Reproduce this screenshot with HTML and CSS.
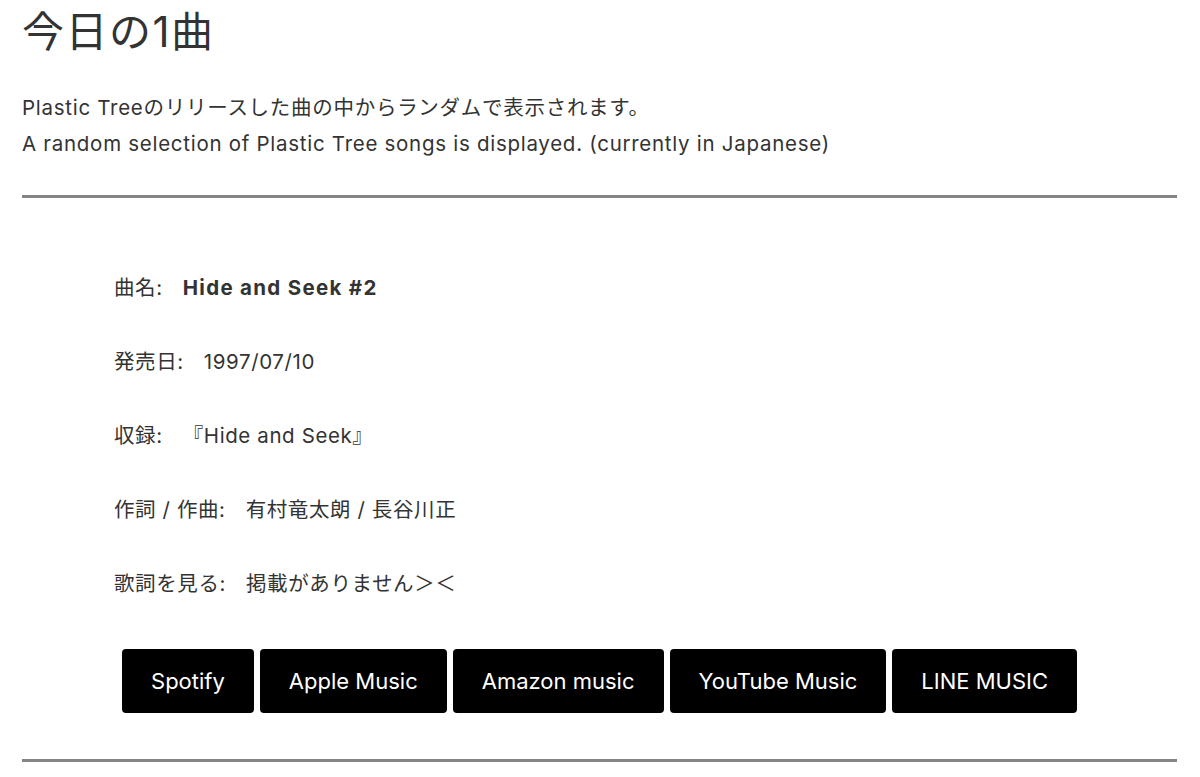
FILE: index.html
```html
<!DOCTYPE html>
<html lang="ja">
<head>
<meta charset="utf-8">
<title>今日の1曲</title>
<link rel="stylesheet" href="styles.css">
</head>
<body>
<main class="page">
  <h1 class="title">今日の1曲</h1>
  <p class="lead">Plastic Treeのリリースした曲の中からランダムで表示されます。<br>A random selection of Plastic Tree songs is displayed. (currently in Japanese)</p>
  <hr class="rule">
  <section class="song">
    <div class="row"><span class="label">曲名:</span><span class="value strong">Hide and Seek #2</span></div>
    <div class="row"><span class="label">発売日:</span><span class="value">1997/07/10</span></div>
    <div class="row"><span class="label">収録:</span><span class="value">『Hide and Seek』</span></div>
    <div class="row"><span class="label">作詞 / 作曲:</span><span class="value">有村竜太朗 / 長谷川正</span></div>
    <div class="row"><span class="label">歌詞を見る:</span><span class="value">掲載がありません＞＜</span></div>
  </section>
  <nav class="links">
    <a class="btn" href="#">Spotify</a>
    <a class="btn" href="#">Apple Music</a>
    <a class="btn" href="#">Amazon music</a>
    <a class="btn" href="#">YouTube Music</a>
    <a class="btn" href="#">LINE MUSIC</a>
  </nav>
  <hr class="rule rule-bottom">
</main>
</body>
</html>
```

FILE: styles.css
```css
html, body {
  margin: 0;
  padding: 0;
  background: #fff;
}
body {
  font-family: Inter, "Noto Sans CJK JP", sans-serif;
  color: #333;
}
.page {
  padding: 0 23px 0 22px;
}
.title {
  margin: 2px 0 0;
  font-size: 42px;
  line-height: 60px;
  font-weight: 400;
  letter-spacing: 1.5px;
}
.lead {
  margin: 28px 0 0;
  font-size: 20.5px;
  line-height: 36px;
  letter-spacing: 0.72px;
}
.rule {
  margin: 33px 0 0;
  border: 0;
  height: 3px;
  background: #858585;
}
.song {
  margin-top: 72px;
  padding-left: 92px;
  display: flex;
  flex-direction: column;
  gap: 38px;
}
.row {
  display: flex;
  align-items: center;
  height: 36px;
  font-size: 20.5px;
  line-height: 36px;
  letter-spacing: 0.6px;
}
.label {
  margin-right: 20px;
}
.strong {
  font-weight: 700;
  letter-spacing: 1.3px;
}
.links {
  margin-top: 47px;
  display: flex;
  justify-content: center;
  gap: 6px;
}
.btn {
  display: flex;
  align-items: center;
  justify-content: center;
  height: 64px;
  padding: 0 29px;
  background: #000;
  color: #fff;
  border-radius: 4px;
  font-size: 22px;
  text-decoration: none;
}
.rule-bottom {
  margin-top: 46px;
}
```
